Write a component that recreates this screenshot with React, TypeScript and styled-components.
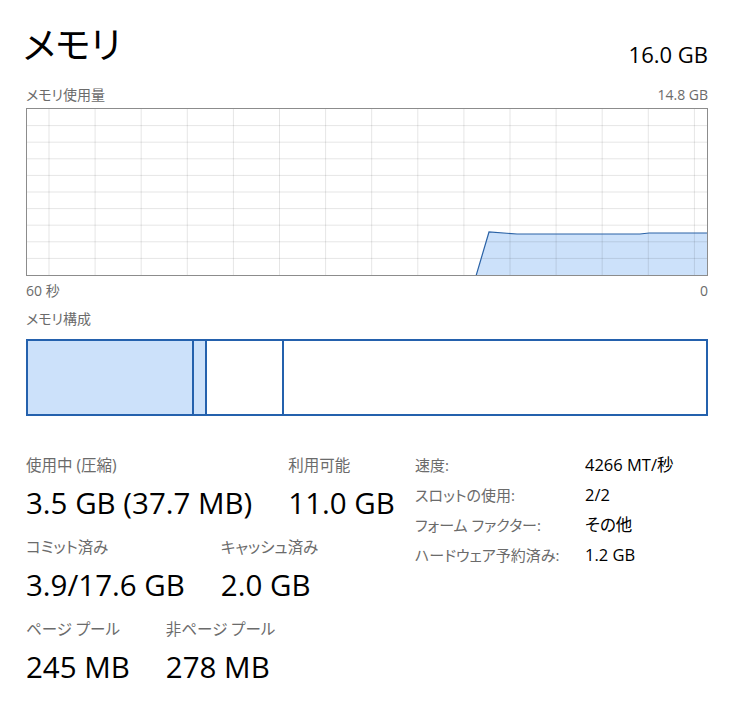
import React from "react";
import styled, { createGlobalStyle } from "styled-components";

const GlobalStyle = createGlobalStyle`
  body {
    margin: 0;
    background: #ffffff;
  }
`;

const FONT = `"Open Sans", "Noto Sans CJK JP", sans-serif`;

interface Stat {
  label: string;
  value: string;
}

interface Segment {
  width: number;
  filled: boolean;
}

const statRows: Stat[][] = [
  [
    { label: "使用中 (圧縮)", value: "3.5 GB (37.7 MB)" },
    { label: "利用可能", value: "11.0 GB" },
  ],
  [
    { label: "コミット済み", value: "3.9/17.6 GB" },
    { label: "キャッシュ済み", value: "2.0 GB" },
  ],
  [
    { label: "ページ プール", value: "245 MB" },
    { label: "非ページ プール", value: "278 MB" },
  ],
];

const details: Stat[] = [
  { label: "速度:", value: "4266 MT/秒" },
  { label: "スロットの使用:", value: "2/2" },
  { label: "フォーム ファクター:", value: "その他" },
  { label: "ハードウェア予約済み:", value: "1.2 GB" },
];

// in use / modified / standby, the rest is free
const segments: Segment[] = [
  { width: 164, filled: true },
  { width: 11, filled: true },
  { width: 75, filled: false },
];

const Page = styled.div`
  width: 741px;
  box-sizing: border-box;
  padding: 16px 33px 30px 26px;
  font-family: ${FONT};
  font-feature-settings: "palt";
  color: #000;
`;

const Header = styled.div`
  display: flex;
  justify-content: space-between;
  align-items: flex-end;
  height: 50px;
`;

const Title = styled.h1`
  margin: 0 0 3px -3px;
  font-size: 37px;
  font-weight: 400;
  line-height: 1;
`;

const Total = styled.div`
  font-size: 22px;
  line-height: 1;
  margin-bottom: 1px;
`;

const CaptionRow = styled.div<{ $top: number }>`
  display: flex;
  justify-content: space-between;
  margin-top: ${(p) => p.$top}px;
  font-size: 14px;
  line-height: 16px;
  color: #6b6b6b;
`;

const ChartBox = styled.div`
  margin-top: 5px;
  height: 166px;
  border: 1px solid #8c8c8c;
  overflow: hidden;
`;

const Composition = styled.div`
  margin-top: 12px;
  height: 73px;
  display: flex;
  border: 2px solid #2461ad;
`;

const Part = styled.div<{ $filled: boolean; $last?: boolean }>`
  flex: ${(p) => (p.$last ? "1" : "none")};
  background: ${(p) => (p.$filled ? "#cce1fa" : "#ffffff")};
  border-right: ${(p) => (p.$last ? "none" : "2px solid #2461ad")};
`;

const Stats = styled.div`
  margin-top: 38px;
  display: grid;
  grid-template-columns: 389px 1fr;
`;

const StatColumn = styled.div`
  display: flex;
  flex-direction: column;
  gap: 15px;
`;

const StatRow = styled.div`
  display: flex;
  gap: 36px;
`;

const StatBlock = styled.div`
  display: flex;
  flex-direction: column;
`;

const StatLabel = styled.div`
  font-size: 15.5px;
  line-height: 22px;
  color: #6b6b6b;
`;

const StatValue = styled.div`
  font-size: 29.5px;
  line-height: 36px;
  margin-top: 9px;
`;

const DetailTable = styled.div`
  display: grid;
  grid-template-columns: 170px 1fr;
  row-gap: 8px;
  align-content: start;
`;

const DetailLabel = styled.div`
  font-size: 15px;
  line-height: 22px;
  color: #6b6b6b;
`;

const DetailValue = styled.div`
  font-size: 16.5px;
  line-height: 22px;
  color: #000;
`;

const W = 680;
const H = 166;

const UsageChart: React.FC = () => {
  const cols = Array.from({ length: 15 }, (_, i) => 22 + i * 46.1);
  const rows = Array.from({ length: 9 }, (_, i) => 16.6 * (i + 1));
  const line = "449,167 462,123 490,125 613,125 622,124 681,124";
  return (
    <svg width={W} height={H} viewBox={`0 0 ${W} ${H}`}>
      <polygon points={`${line} 681,167`} fill="#cce1fa" />
      {cols.map((x) => (
        <line key={`c${x}`} x1={x} x2={x} y1={0} y2={H} stroke="rgba(0,0,0,0.1)" />
      ))}
      {rows.map((y) => (
        <line key={`r${y}`} x1={0} x2={W} y1={y} y2={y} stroke="rgba(0,0,0,0.1)" />
      ))}
      <polyline points={line} fill="none" stroke="#2a62a6" strokeWidth={1.2} />
    </svg>
  );
};

const App: React.FC = () => {
  return (
    <Page>
      <GlobalStyle />
      <Header>
        <Title>メモリ</Title>
        <Total>16.0 GB</Total>
      </Header>
      <CaptionRow $top={21}>
        <span>メモリ使用量</span>
        <span>14.8 GB</span>
      </CaptionRow>
      <ChartBox>
        <UsageChart />
      </ChartBox>
      <CaptionRow $top={7}>
        <span>60 秒</span>
        <span>0</span>
      </CaptionRow>
      <CaptionRow $top={12}>
        <span>メモリ構成</span>
      </CaptionRow>
      <Composition>
        {segments.map((s, i) => (
          <Part key={i} $filled={s.filled} style={{ width: s.width }} />
        ))}
        <Part $filled={false} $last />
      </Composition>
      <Stats>
        <StatColumn>
          {statRows.map((row, i) => (
            <StatRow key={i}>
              {row.map((s) => (
                <StatBlock key={s.label}>
                  <StatLabel>{s.label}</StatLabel>
                  <StatValue>{s.value}</StatValue>
                </StatBlock>
              ))}
            </StatRow>
          ))}
        </StatColumn>
        <DetailTable>
          {details.map((d) => (
            <React.Fragment key={d.label}>
              <DetailLabel>{d.label}</DetailLabel>
              <DetailValue>{d.value}</DetailValue>
            </React.Fragment>
          ))}
        </DetailTable>
      </Stats>
    </Page>
  );
};

export default App;
